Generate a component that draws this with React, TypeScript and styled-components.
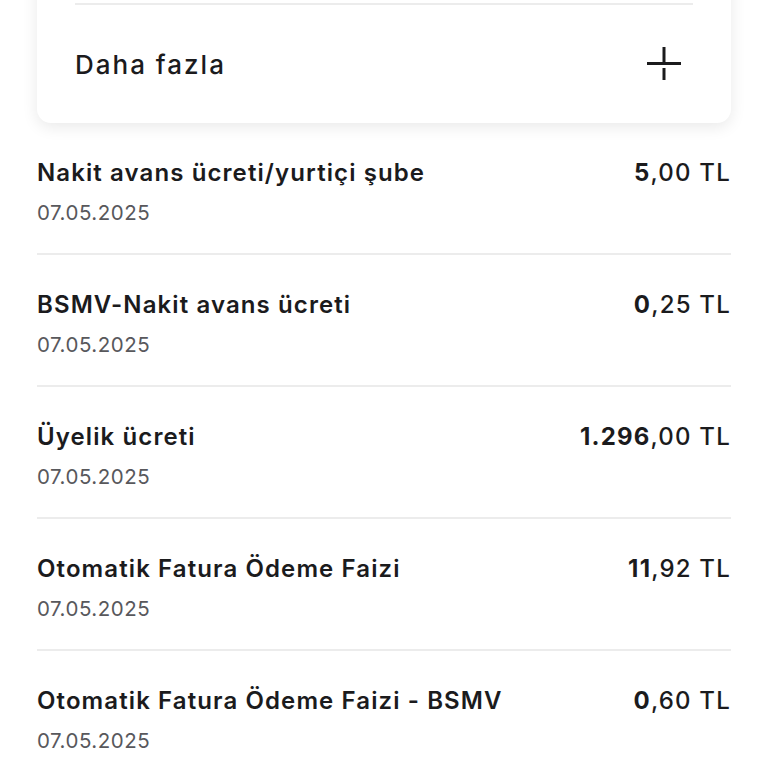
import styled, { createGlobalStyle } from "styled-components";

const Global = createGlobalStyle`
  body {
    margin: 0;
    background: #ffffff;
    font-family: Inter, "Noto Sans", sans-serif;
    color: #1b1b1d;
  }
`;

const Page = styled.div`
  display: flex;
  flex-direction: column;
  padding: 0 37px;
  overflow: hidden;
  height: 768px;
`;

// kartın üst kısmı ekranın dışında kalıyor
const Card = styled.div`
  margin-top: -40px;
  padding: 43px 38px 0;
  background: #fff;
  border-radius: 14px;
  box-shadow: 0 4px 16px rgba(0, 0, 0, 0.09);
`;

const MoreRow = styled.div`
  display: flex;
  align-items: center;
  justify-content: space-between;
  border-top: 2px solid #ececec;
  height: 118px;
  padding-right: 11px;
`;

const MoreLabel = styled.span`
  font-size: 26px;
  font-weight: 500;
  letter-spacing: 2px;
  color: #1b1b1d;
`;

const List = styled.div`
  display: flex;
  flex-direction: column;
`;

const Item = styled.div`
  display: grid;
  grid-template-columns: 1fr auto;
  grid-template-rows: 28px 24px;
  row-gap: 14px;
  padding: 36px 0 28px;
  border-bottom: 2px solid #ececec;
`;

const Title = styled.div`
  font-size: 24px;
  font-weight: 600;
  line-height: 28px;
  letter-spacing: 1.1px;
  color: #1b1b1d;
`;

const Date = styled.div`
  font-size: 20.5px;
  line-height: 24px;
  letter-spacing: 0.5px;
  color: #58585c;
  grid-column: 1;
`;

const Amount = styled.div`
  font-size: 24px;
  line-height: 28px;
  font-weight: 500;
  letter-spacing: 1.2px;
  text-align: right;
  color: #1b1b1d;
`;

const Whole = styled.span`
  font-weight: 700;
`;

const PlusIcon = () => (
  <svg width="36" height="36" viewBox="0 0 36 36" fill="none" stroke="#1b1b1d" strokeWidth="3">
    <line x1="1" y1="17.5" x2="35" y2="17.5" />
    <line x1="18" y1="1" x2="18" y2="16" />
    <line x1="18" y1="22" x2="18" y2="34" />
  </svg>
);

type Row = { title: string; date: string; whole: string; frac: string };

const rows: Row[] = [
  { title: "Nakit avans ücreti/yurtiçi şube", date: "07.05.2025", whole: "5", frac: ",00 TL" },
  { title: "BSMV-Nakit avans ücreti", date: "07.05.2025", whole: "0", frac: ",25 TL" },
  { title: "Üyelik ücreti", date: "07.05.2025", whole: "1.296", frac: ",00 TL" },
  { title: "Otomatik Fatura Ödeme Faizi", date: "07.05.2025", whole: "11", frac: ",92 TL" },
  { title: "Otomatik Fatura Ödeme Faizi - BSMV", date: "07.05.2025", whole: "0", frac: ",60 TL" },
];

const App: React.FC = () => {
  return (
    <Page>
      <Global />
      <Card>
        <MoreRow>
          <MoreLabel>Daha fazla</MoreLabel>
          <PlusIcon />
        </MoreRow>
      </Card>
      <List>
        {rows.map((r, i) => (
          <Item key={i}>
            <Title>{r.title}</Title>
            <Amount>
              <Whole>{r.whole}</Whole>
              {r.frac}
            </Amount>
            <Date>{r.date}</Date>
          </Item>
        ))}
      </List>
    </Page>
  );
};

export default App;
